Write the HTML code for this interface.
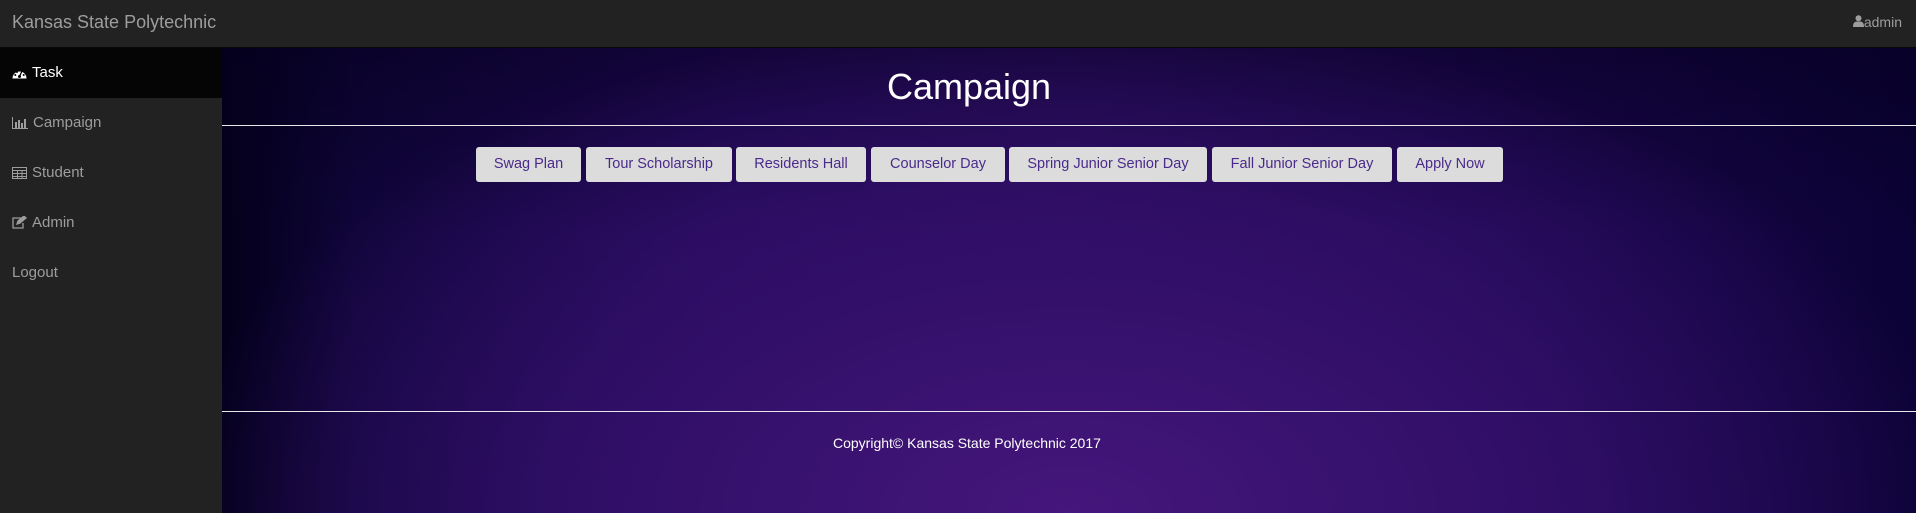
<!DOCTYPE html>
<html><head><style>
body{margin:0;width:1916px;height:513px;overflow:hidden;font-family:"Liberation Sans",Arial,sans-serif;background:#222;}
.nav{position:absolute;left:0;top:0;width:1916px;height:47px;background:#222;border-bottom:1px solid #080808;}
.brand{position:absolute;left:12px;top:12px;font-size:18px;color:#9d9d9d;}
.user{position:absolute;right:14px;top:14px;font-size:14px;color:#9d9d9d;}
.side{position:absolute;left:0;top:48px;width:222px;height:465px;background:#222;}
.side div{height:50px;line-height:50px;padding-left:12px;font-size:15px;color:#9d9d9d;}
.side div.act{background:#050505;color:#fff;}
.side svg{vertical-align:-2px;margin-right:5px}
.main{position:absolute;left:222px;top:48px;width:1694px;height:465px;
background:
radial-gradient(ellipse 900px 500px at 50% 100%, #45167c 0%, #33106a 45%, rgba(30,8,70,0) 100%),
linear-gradient(180deg,rgba(5,0,30,0.55) 0%,rgba(5,0,30,0) 40%),
linear-gradient(90deg,#03001a 0%,#10053a 8%,#23095a 30%,#2a0c60 50%,#1d0750 75%,#0b0235 100%);}
h1{position:absolute;left:0;width:1494px;top:18px;margin:0;text-align:center;font-weight:normal;font-size:36px;color:#fff;}
.hr1{position:absolute;left:0;top:77px;width:1694px;height:1px;background:#e8e8e8}
.hr2{position:absolute;left:0;top:363px;width:1694px;height:1px;background:#e8e8e8}
.btn{position:absolute;top:99px;height:35px;line-height:35px;text-align:center;background:#dcdcdc;border-radius:3px;font-size:14.5px;color:#4a2a8a;}
.copy{position:absolute;left:611px;top:387px;font-size:14px;color:#fff;}
</style></head><body>
<div class="nav"><div class="brand">Kansas State Polytechnic</div>
<div class="user"><svg width="11" height="12" viewBox="0 0 11 12"><circle cx="5.5" cy="3.2" r="3" fill="#9d9d9d"/><path d="M0 12 C0 7 2 6.5 5.5 6.5 C9 6.5 11 7 11 12Z" fill="#9d9d9d"/></svg>admin</div></div>
<div class="side">
<div class="act"><svg width="15" height="12" viewBox="0 0 15 12"><path d="M0.5 11.5 A7 7 0 0 1 14.5 11.5Z" fill="#fff"/><circle cx="7.5" cy="9.5" r="1.5" fill="#000"/><path d="M7.5 9.5 L9.8 4.5" stroke="#000" stroke-width="1.3"/><circle cx="3.3" cy="8" r="1" fill="#000"/><circle cx="11.7" cy="8" r="1" fill="#000"/><circle cx="5" cy="5" r="1" fill="#000"/></svg>Task</div>
<div><svg width="16" height="12" viewBox="0 0 16 12" fill="#9d9d9d"><rect x="0" y="0" width="1" height="12"/><rect x="0" y="11" width="16" height="1"/><rect x="3" y="5" width="2" height="6"/><rect x="6" y="3" width="2" height="8"/><rect x="9" y="6" width="2" height="5"/><rect x="12" y="2" width="2" height="9"/></svg>Campaign</div>
<div><svg width="15" height="12" viewBox="0 0 15 12" fill="none" stroke="#9d9d9d"><rect x="0.5" y="0.5" width="14" height="11"/><path d="M0.5 3.5H14.5M0.5 6.5H14.5M0.5 9.5H14.5M5.5 3.5V11.5M10 3.5V11.5"/></svg>Student</div>
<div><svg width="15" height="13" viewBox="0 0 15 13" fill="none" stroke="#9d9d9d" stroke-width="1.3"><path d="M9 2H1V12H11V7"/><path d="M5 8L6 5 12 0 14 2 8 7Z" fill="#9d9d9d"/></svg>Admin</div>
<div>Logout</div>
</div>
<div class="main">
<h1>Campaign</h1>
<div class="hr1"></div>
<div class="btn" style="left:254px;width:105px">Swag Plan</div>
<div class="btn" style="left:364px;width:146px">Tour Scholarship</div>
<div class="btn" style="left:514px;width:130px">Residents Hall</div>
<div class="btn" style="left:649px;width:134px">Counselor Day</div>
<div class="btn" style="left:787px;width:198px">Spring Junior Senior Day</div>
<div class="btn" style="left:990px;width:180px">Fall Junior Senior Day</div>
<div class="btn" style="left:1175px;width:106px">Apply Now</div>
<div class="hr2"></div>
<div class="copy">Copyright© Kansas State Polytechnic 2017</div>
</div>
</body></html>
